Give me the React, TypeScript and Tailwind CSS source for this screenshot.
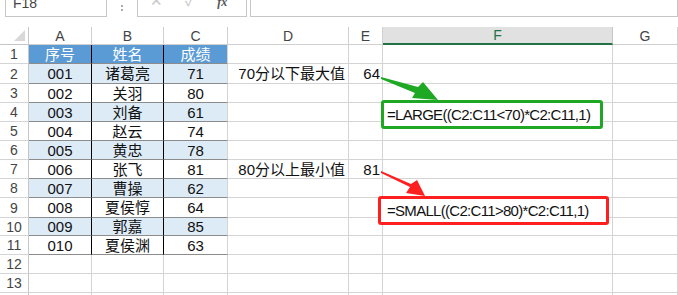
import React from 'react';

const cols = ['A', 'B', 'C', 'D', 'E', 'F', 'G'];
const widths = ['w-[63px]', 'w-[72px]', 'w-[64px]', 'w-[121px]', 'w-[34px]', 'w-[230px]', 'w-[65px]'];
const heights = ['h-[19px]', 'h-[20px]', 'h-[19px]', 'h-[19px]', 'h-[19px]', 'h-[19px]', 'h-[19px]', 'h-[19px]', 'h-[20px]', 'h-[18px]', 'h-[19px]', 'h-[19px]', 'h-[19px]', 'h-[19px]'];

const data = [
    ['001', '诸葛亮', '71'],
    ['002', '关羽', '80'],
    ['003', '刘备', '61'],
    ['004', '赵云', '74'],
    ['005', '黄忠', '78'],
    ['006', '张飞', '81'],
    ['007', '曹操', '62'],
    ['008', '夏侯惇', '64'],
    ['009', '郭嘉', '85'],
    ['010', '夏侯渊', '63'],
];

const font = "font-['Liberation_Sans','Noto_Sans_CJK_SC',sans-serif]";

function Cell({ r, c }: { r: number; c: number }) {
    const inTable = r <= 11 && c <= 2;
    let bg = 'bg-white';
    let text = '';
    let cls = 'justify-center';
    let color = 'text-[#111]';
    if (inTable) {
        if (r === 1) {
            bg = 'bg-[#5b9bd5]';
            color = 'text-white';
            text = ['序号', '姓名', '成绩'][c];
        } else {
            if (r % 2 === 0) bg = 'bg-[#ddebf7]';
            text = data[r - 2][c];
        }
    }
    if (c === 3 && r === 2) { text = '70分以下最大值'; cls = 'justify-end pr-[3px]'; }
    if (c === 3 && r === 7) { text = '80分以上最小值'; cls = 'justify-end pr-[3px]'; }
    if (c === 4 && r === 2) { text = '64'; cls = 'justify-end pr-[2px]'; }
    if (c === 4 && r === 7) { text = '81'; cls = 'justify-end pr-[2px]'; }

    const right = inTable && c < 2 ? 'border-r-black' : 'border-r-[#d4d4d4]';
    const bottom = inTable ? 'border-b-[#8c8c8c]' : 'border-b-[#d4d4d4]';
    return (
        <div className={`${widths[c]} shrink-0 flex items-center border-r border-b ${right} ${bottom} ${bg} ${color} ${cls} text-[15px] leading-none whitespace-nowrap`}>
            {text}
        </div>
    );
}

export default function App() {
    return (
        <div className={`relative w-[678px] h-[295px] overflow-hidden bg-white ${font}`}>
            {/* formula bar */}
            <div className="h-[17px] flex items-end overflow-hidden">
                <div className="ml-[5px] w-[102px] h-[28px] shrink-0 border border-[#c6c6c6] flex items-end justify-between pl-[7px] pr-[6px] pb-[6px]">
                    <span className="text-[14px] leading-none text-[#444]">F18</span>
                    <span className="mb-[10px] w-0 h-0 border-l-[4px] border-r-[4px] border-t-[4px] border-l-transparent border-r-transparent border-t-[#777]" />
                </div>
                <div className="w-[30px] shrink-0 flex flex-col items-center gap-[2px] pb-[6px]">
                    <span className="w-[2px] h-[2px] bg-[#aaa]" />
                    <span className="w-[2px] h-[2px] bg-[#aaa]" />
                </div>
                <div className="w-[110px] h-[28px] shrink-0 border border-[#c6c6c6] flex items-end pb-[8px] text-[#c8c8c8]">
                    <span className="ml-[12px] text-[15px] leading-none">✕</span>
                    <span className="ml-[22px] text-[15px] leading-none">✓</span>
                    <span className="ml-[22px] text-[12px] leading-none italic text-[#555] font-['Liberation_Serif',serif] font-bold">fx</span>
                </div>
                <div className="ml-[3px] flex-1 h-[28px] border border-[#c6c6c6]" />
            </div>
            <div className="h-[10px]" />

            {/* column header */}
            <div className="flex h-[18px]">
                <div className="w-[29px] shrink-0 border-r border-b border-[#c6c6c6] relative">
                    <span className="absolute right-[4px] bottom-[3px] w-0 h-0 border-l-[11px] border-t-[11px] border-l-transparent border-t-transparent border-b-0 border-r-0" style={{}} />
                    <svg className="absolute left-[14px] top-[3px]" width="11" height="11"><polygon points="11,0 11,11 0,11" fill="#d8d8d8" /></svg>
                </div>
                {cols.map((l, i) => (
                    <div key={l} className={`${widths[i]} shrink-0 flex items-center justify-center text-[14px] leading-none border-r ${l === 'F' ? 'bg-[#e1e1e1] text-[#217346] border-b-2 border-b-[#217346] border-r-[#c6c6c6]' : 'text-[#444] border-b border-[#d0d0d0]'}`}>
                        {l}
                    </div>
                ))}
            </div>

            {/* rows */}
            {heights.map((h, ri) => (
                <div key={ri} className={`flex ${h}`}>
                    <div className="w-[29px] shrink-0 flex items-center justify-center text-[14px] leading-none text-[#444] border-r border-b border-r-[#c6c6c6] border-b-[#d4d4d4]">
                        {ri + 1}
                    </div>
                    {cols.map((_, ci) => <Cell key={ci} r={ri + 1} c={ci} />)}
                </div>
            ))}

            {/* annotations */}
            <div className="absolute left-[381px] top-[100px] w-[222px] h-[29px] border-[3px] border-[#1fa824] rounded-[3px] bg-white flex items-center pl-[3px] text-[15px] leading-none text-[#111] tracking-[-0.7px] whitespace-nowrap">
                =LARGE((C2:C11&lt;70)*C2:C11,1)
            </div>
            <div className="absolute left-[378px] top-[196px] w-[231px] h-[29px] border-[3px] border-[#ff1f1f] rounded-[3px] bg-white flex items-center pl-[6px] text-[15px] leading-none text-[#111] tracking-[-0.7px] whitespace-nowrap">
                =SMALL((C2:C11&gt;80)*C2:C11,1)
            </div>
            <svg className="absolute left-0 top-0 pointer-events-none" width="678" height="295">
                <polygon points="381,77 418,87 423,82 438,100 412,98 415,93 381,79" fill="#1fa824" />
                <polygon points="381,171 411,184 417,180 425,196 406,193 410,187 381,173" fill="#ff1f1f" />
            </svg>
        </div>
    );
}
